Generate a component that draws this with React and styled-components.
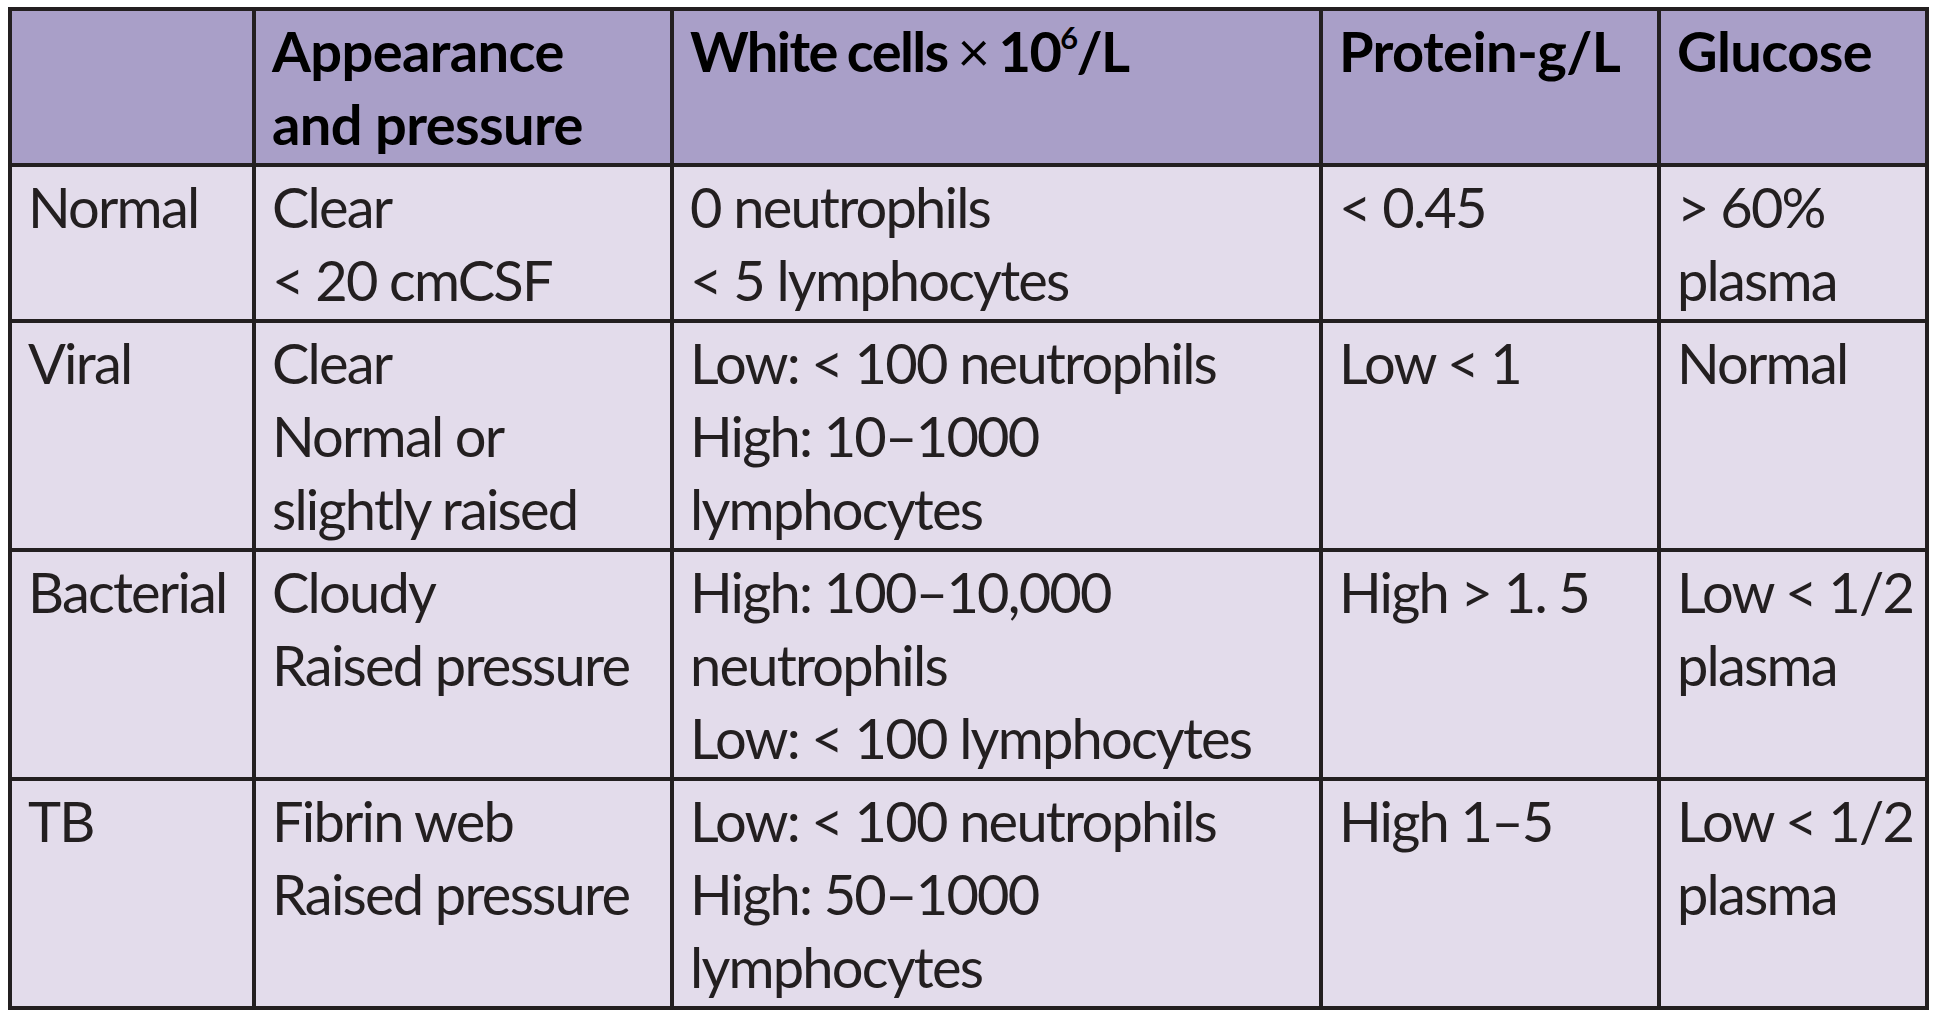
import React from 'react';
import styled, { createGlobalStyle } from 'styled-components';

const GlobalStyle = createGlobalStyle`
  html, body {
    margin: 0;
    padding: 0;
    background: #ffffff;
  }
  body {
    font-family: Lato, "Liberation Sans", sans-serif;
    color: #231f20;
  }
`;

const Tight = styled.span`
  letter-spacing: -1.6px;
  word-spacing: -2px;
`;

const TimesSign = styled.span`
  font-weight: 400;
`;

const Sup = styled.sup`
  font-size: 0.55em;
  line-height: 0;
  vertical-align: 0.75em;
`;

const Page = styled.div`
  padding: 7px 0 0 8px;
`;

const Table = styled.table`
  width: 1917px;
  table-layout: fixed;
  border-collapse: collapse;
  border: 4px solid #231f20;
  font-size: 56px;
  line-height: 73px;
`;

const Cell = styled.td`
  vertical-align: top;
  text-align: left;
  padding: 3px 8px 3px 16px;
  border: 4px solid #231f20;
  background: ${props => (props.$head ? '#a99fc8' : '#e3dceb')};
  color: ${props => (props.$head ? '#000000' : '#231f20')};
  font-weight: ${props => (props.$head ? 700 : 400)};
  letter-spacing: ${props => (props.$head ? '-0.6px' : '-1.8px')};
`;

const Line = styled.div`
  white-space: nowrap;
`;

const columns = [244, 418, 649, 338, 268];

const header = [
  [],
  ['Appearance', 'and pressure'],
  [<Tight>White cells <TimesSign>×</TimesSign> 10<Sup>6</Sup>/L</Tight>],
  ['Protein-g/L'],
  ['Glucose']
];

const rows = [
  [
    ['Normal'],
    ['Clear', '< 20 cmCSF'],
    ['0 neutrophils', '< 5 lymphocytes'],
    ['< 0.45'],
    ['> 60%', 'plasma']
  ],
  [
    ['Viral'],
    ['Clear', 'Normal or', 'slightly raised'],
    ['Low: < 100 neutrophils', 'High: 10–1000', 'lymphocytes'],
    ['Low < 1'],
    ['Normal']
  ],
  [
    ['Bacterial'],
    ['Cloudy', 'Raised pressure'],
    ['High: 100–10,000', 'neutrophils', 'Low: < 100 lymphocytes'],
    ['High > 1. 5'],
    ['Low < 1/2', 'plasma']
  ],
  [
    ['TB'],
    ['Fibrin web', 'Raised pressure'],
    ['Low: < 100 neutrophils', 'High: 50–1000', 'lymphocytes'],
    ['High 1–5'],
    ['Low < 1/2', 'plasma']
  ]
];

const CellLines = ({ lines, head }) => (
  <Cell as={head ? 'th' : 'td'} $head={head}>
    {lines.length === 0 ? <Line>&nbsp;</Line> : lines.map((l, i) => <Line key={i}>{l}</Line>)}
  </Cell>
);

export default function App() {
  return (
    <Page>
      <GlobalStyle />
      <Table>
        <colgroup>
          {columns.map((w, i) => <col key={i} style={{ width: w }} />)}
        </colgroup>
        <thead>
          <tr>
            {header.map((lines, i) => <CellLines key={i} lines={lines} head />)}
          </tr>
        </thead>
        <tbody>
          {rows.map((row, r) => (
            <tr key={r}>
              {row.map((lines, c) => <CellLines key={c} lines={lines} />)}
            </tr>
          ))}
        </tbody>
      </Table>
    </Page>
  );
}
